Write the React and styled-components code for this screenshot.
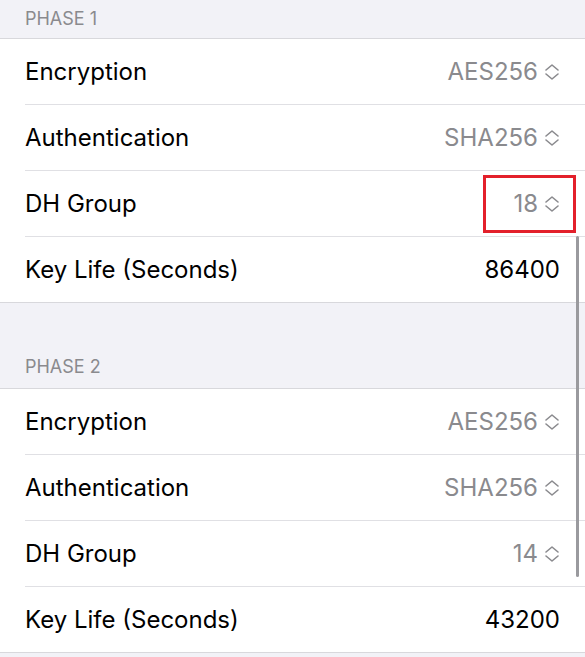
import styled, { createGlobalStyle } from "styled-components";

const GlobalStyle = createGlobalStyle`
  html, body {
    margin: 0;
    padding: 0;
    background: #f2f2f7;
    font-family: Inter, "Liberation Sans", sans-serif;
    -webkit-font-smoothing: antialiased;
  }
`;

const Screen = styled.div`
  position: relative;
  width: 585px;
  height: 657px;
  overflow: hidden;
  background: #f2f2f7;
`;

const SectionHeader = styled.div`
  height: ${(p) => p.$height}px;
  box-sizing: border-box;
  padding: 0 25px ${(p) => p.$pad}px;
  display: flex;
  align-items: flex-end;
  font-size: 18px;
  line-height: 22px;
  color: #8a8a8e;
  border-bottom: 1px solid #d8d8dc;
`;

const Card = styled.div`
  background: #fff;
  border-bottom: 1px solid #d8d8dc;
`;

const Row = styled.div`
  height: 65px;
  display: flex;
  align-items: center;
  justify-content: space-between;
  margin-left: 25px;
  padding-right: 25px;
  font-size: 24px;
  border-bottom: 1px solid #e0e0e4;
  &:last-child {
    border-bottom: none;
  }
`;

const Label = styled.span`
  color: #000;
`;

const Value = styled.span`
  position: relative;
  display: flex;
  align-items: center;
  gap: 6px;
  color: ${(p) => (p.$picker ? "#8a8a8e" : "#000")};
`;

const Highlight = styled.span`
  position: absolute;
  left: -30px;
  right: -16px;
  top: -14px;
  bottom: -15px;
  border: 3px solid #e3202b;
`;

const Scrollbar = styled.div`
  position: absolute;
  left: 576px;
  top: 236px;
  width: 3px;
  height: 341px;
  border-radius: 2px;
  background: #9a9a9e;
`;

const Chevrons = () => (
  <svg width="16" height="18" viewBox="0 0 16 18" fill="none">
    <path
      d="M2 7L8 2L14 7M2 11L8 16L14 11"
      stroke="#8a8a8e"
      strokeWidth="1.6"
      strokeLinecap="round"
      strokeLinejoin="round"
    />
  </svg>
);

const phases = [
  {
    title: "PHASE 1",
    height: 39,
    pad: 8,
    rows: [
      ["Encryption", "AES256", true],
      ["Authentication", "SHA256", true],
      ["DH Group", "18", true, true],
      ["Key Life (Seconds)", "86400", false],
    ],
  },
  {
    title: "PHASE 2",
    height: 86,
    pad: 10,
    rows: [
      ["Encryption", "AES256", true],
      ["Authentication", "SHA256", true],
      ["DH Group", "14", true],
      ["Key Life (Seconds)", "43200", false],
    ],
  },
];

export default function App() {
  return (
    <Screen>
      <GlobalStyle />
      {phases.map((phase) => (
        <section key={phase.title}>
          <SectionHeader $height={phase.height} $pad={phase.pad}>
            {phase.title}
          </SectionHeader>
          <Card>
            {phase.rows.map(([label, value, picker, marked]) => (
              <Row key={label}>
                <Label>{label}</Label>
                <Value $picker={picker}>
                  {value}
                  {picker && <Chevrons />}
                  {marked && <Highlight />}
                </Value>
              </Row>
            ))}
          </Card>
        </section>
      ))}
      <Scrollbar />
    </Screen>
  );
}
